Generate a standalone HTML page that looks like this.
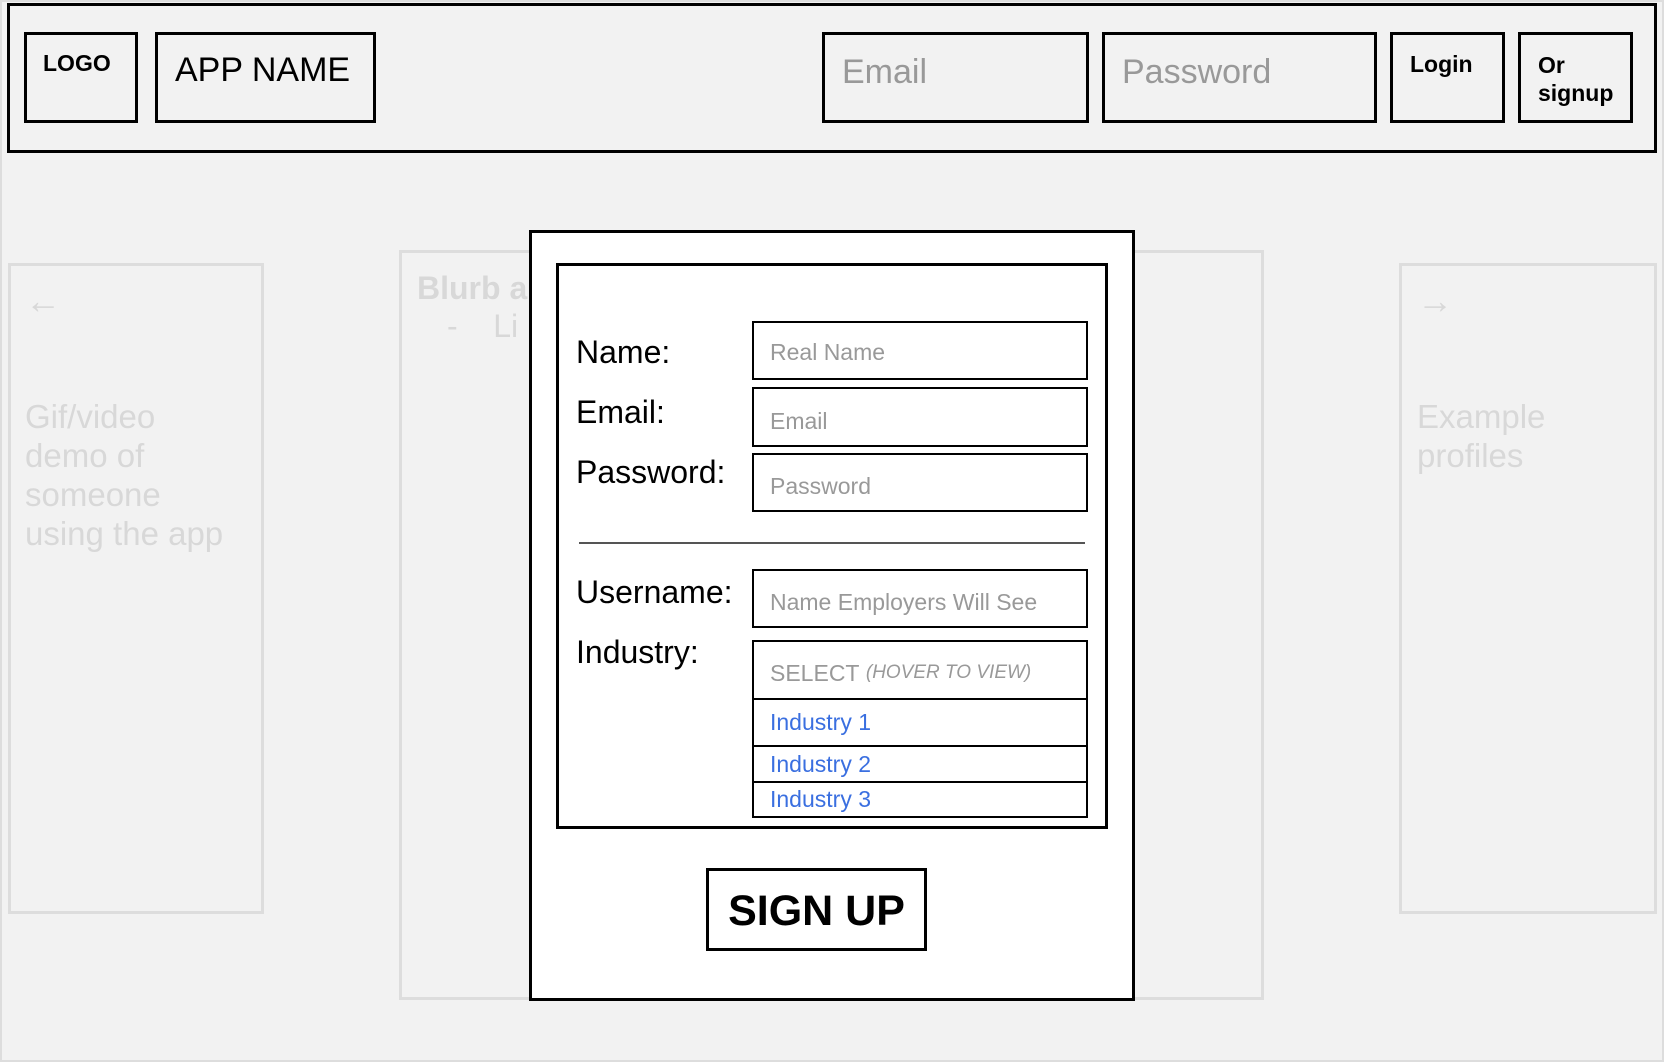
<!DOCTYPE html>
<html><head><style>
body{margin:0;width:1664px;height:1062px;background:#f2f2f2;position:relative;overflow:hidden;font-family:"Liberation Sans",Arial,sans-serif;}
.a{position:absolute;box-sizing:border-box;}
.bk{border:3px solid #000;}
.lt{border:3px solid #ddd;}
.g{color:#d8d8d8;}
.in{border:2px solid #000;background:#fff;color:#999;font-size:23px;padding-left:16px;display:flex;align-items:center;}
.lab{font-size:32px;color:#000;}
.ind{border:2px solid #000;background:#fff;color:#3a6fe0;font-size:23px;padding-left:16px;display:flex;align-items:center;}
</style></head><body>
<div class="a" style="left:0;top:0;width:1664px;height:1062px;border:2px solid #ddd;"></div>
<div class="a bk" style="left:7px;top:3px;width:1650px;height:150px;"></div>
<div class="a bk" style="left:24px;top:32px;width:114px;height:91px;font-weight:bold;font-size:23px;padding:15px 0 0 16px;">LOGO</div>
<div class="a bk" style="left:155px;top:32px;width:221px;height:91px;font-size:34px;padding:16px 0 0 17px;">APP NAME</div>
<div class="a bk" style="left:822px;top:32px;width:267px;height:91px;font-size:34px;color:#999;padding:18px 0 0 17px;">Email</div>
<div class="a bk" style="left:1102px;top:32px;width:275px;height:91px;font-size:34px;color:#999;padding:18px 0 0 17px;">Password</div>
<div class="a bk" style="left:1390px;top:32px;width:115px;height:91px;font-weight:bold;font-size:23px;padding:16px 0 0 17px;">Login</div>
<div class="a bk" style="left:1518px;top:32px;width:115px;height:91px;font-weight:bold;font-size:23px;padding:16px 0 0 17px;line-height:28px;">Or<br>signup</div>

<div class="a lt" style="left:8px;top:263px;width:256px;height:651px;"></div>
<div class="a g" style="left:25px;top:280px;font-size:36px;">&larr;</div>
<div class="a g" style="left:25px;top:397px;font-size:33px;line-height:39px;">Gif/video<br>demo of<br>someone<br>using the app</div>
<div class="a lt" style="left:399px;top:250px;width:865px;height:750px;"></div>
<div class="a g" style="left:417px;top:270px;font-size:32px;font-weight:bold;">Blurb a</div>
<div class="a g" style="left:447px;top:308px;font-size:32px;">-&nbsp;&nbsp;&nbsp;&nbsp;Li</div>
<div class="a lt" style="left:1399px;top:263px;width:258px;height:651px;"></div>
<div class="a g" style="left:1417px;top:280px;font-size:36px;">&rarr;</div>
<div class="a g" style="left:1417px;top:397px;font-size:33px;line-height:39px;">Example<br>profiles</div>

<div class="a bk" style="left:529px;top:230px;width:606px;height:771px;background:#fff;"></div>
<div class="a bk" style="left:556px;top:263px;width:552px;height:566px;"></div>
<div class="a lab" style="left:576px;top:334px;">Name:</div>
<div class="a lab" style="left:576px;top:394px;">Email:</div>
<div class="a lab" style="left:576px;top:454px;">Password:</div>
<div class="a lab" style="left:576px;top:574px;">Username:</div>
<div class="a lab" style="left:576px;top:634px;">Industry:</div>
<div class="a in" style="left:752px;top:321px;width:336px;height:59px;padding-top:4px;">Real Name</div>
<div class="a in" style="left:752px;top:387px;width:336px;height:60px;padding-top:8px;">Email</div>
<div class="a in" style="left:752px;top:453px;width:336px;height:59px;padding-top:8px;">Password</div>
<div class="a" style="left:579px;top:542px;width:506px;height:2px;background:#555;"></div>
<div class="a in" style="left:752px;top:569px;width:336px;height:59px;padding-top:8px;">Name Employers Will See</div>
<div class="a in" style="left:752px;top:640px;width:336px;height:60px;padding-top:6px;">SELECT&nbsp;<i style="font-size:19px;">(HOVER TO VIEW)</i></div>
<div class="a ind" style="left:752px;top:698px;width:336px;height:49px;">Industry 1</div>
<div class="a ind" style="left:752px;top:745px;width:336px;height:38px;">Industry 2</div>
<div class="a ind" style="left:752px;top:781px;width:336px;height:37px;">Industry 3</div>
<div class="a bk" style="left:706px;top:868px;width:221px;height:83px;font-weight:bold;font-size:43px;text-align:center;line-height:81px;">SIGN UP</div>
</body></html>
